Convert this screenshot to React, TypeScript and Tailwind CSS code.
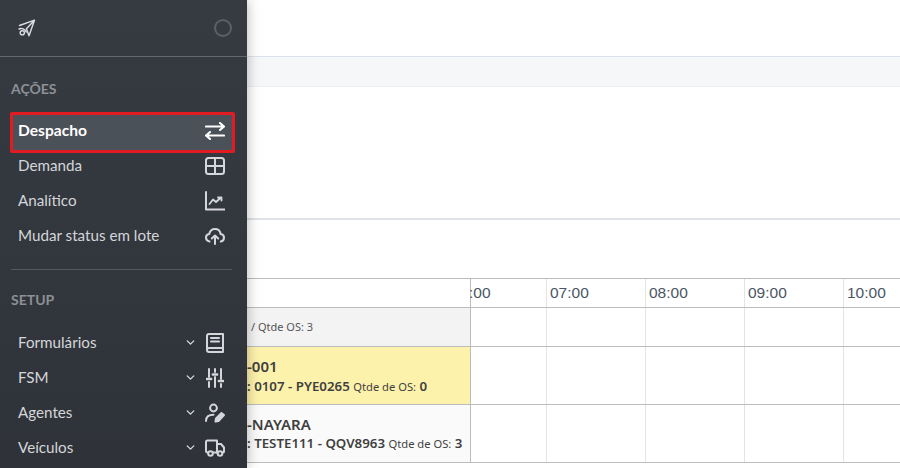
import React from "react";
import { ChevronDown } from "lucide-react";

const sv = { fill: "none", stroke: "currentColor", strokeWidth: 2, strokeLinecap: "round", strokeLinejoin: "round" } as const;

const Plane = () => (
  <svg width="18" height="18" viewBox="0 0 18 18" {...sv} strokeWidth={1.4}>
    <path d="M1.5 6.5 L16.5 1.2 L11 16.8 L8.4 9.8 L16.5 1.2" />
    <circle cx="4.3" cy="13.8" r="2.1" />
    <path d="M1 10 C3.5 8.8 7 9.8 8.2 13" />
  </svg>
);
const Swap = () => (
  <svg width="20" height="18" viewBox="0 0 20 18" {...sv} strokeWidth={2.1} className="-mt-[3px]">
    <path d="M1 4.5 H19 M15 1 L19 4.5 L15 8" />
    <path d="M19 13.5 H1 M5 10 L1 13.5 L5 17" />
  </svg>
);
const GridI = () => (
  <svg width="20" height="18" viewBox="0 0 20 18" {...sv}>
    <rect x="1" y="1" width="18" height="16" rx="2.5" />
    <path d="M10 1 V17 M1 9 H19" />
  </svg>
);
const Chart = () => (
  <svg width="20" height="20" viewBox="0 0 20 20" {...sv}>
    <path d="M1 1 V18.5 H19.5" />
    <path d="M4.5 13 L8 8.5 L11 11 L16 6.5 M13 6.5 H16.5 V9.5" strokeWidth={1.8} />
  </svg>
);
const Cloud = () => (
  <svg width="20" height="18" viewBox="0 0 20 18" {...sv}>
    <path d="M4.5 14.5 C2.4 14.2 1 12.6 1 10.6 C1 8.6 2.4 7.2 4.2 7 C5 3.6 7.4 2 10 2 C13 2 15.2 4.2 15.6 7 C17.6 7.2 19 8.8 19 10.8 C19 12.8 17.8 14.2 15.8 14.5" />
    <path d="M10 17 V8.5 M6.8 11.5 L10 8.5 L13.2 11.5" />
  </svg>
);
const Book = () => (
  <svg width="18" height="20" viewBox="0 0 18 20" {...sv}>
    <path d="M1 16 V3 C1 1.8 1.8 1 3 1 H17 V19 H3 C1.8 19 1 18 1 16.8 C1 15.6 1.8 15 3 15 H17" />
    <path d="M5 5 H13 M5 8.5 H13" />
  </svg>
);
const Sliders = () => (
  <svg width="18" height="20" viewBox="0 0 18 20" {...sv}>
    <path d="M3 1 V9 M3 14 V19 M9 1 V4 M9 9 V19 M15 1 V11 M15 16 V19" />
    <path d="M0.8 11 H5.2 M6.8 6.5 H11.2 M12.8 13 H17.2" strokeWidth={2.4} />
  </svg>
);
const UserPen = () => (
  <svg width="20" height="20" viewBox="0 0 20 20" {...sv}>
    <circle cx="8.5" cy="5" r="3.4" />
    <path d="M1 18 C1 14 4 11.8 8.5 11.8" />
    <path d="M10.5 18.5 L11 15.5 L16.5 10 L19 12 L13.5 18 Z" fill="currentColor" />
  </svg>
);
const Truck = () => (
  <svg width="20" height="18" viewBox="0 0 20 18" {...sv}>
    <path d="M3 13.5 H2.5 C1.6 13.5 1 12.9 1 12 V3 C1 2 1.6 1.5 2.5 1.5 H12 V13.5 H8" />
    <path d="M12 5 H16 L19 8.5 V12.5 C19 13.1 18.6 13.5 18 13.5 H17.5 M12 13.5 H13" />
    <circle cx="5.5" cy="14.5" r="2.3" />
    <circle cx="15" cy="14.5" r="2.3" />
  </svg>
);

const NavRow = ({ label, icon, chevron }: { label: string; icon: React.ReactNode; chevron?: boolean }) => (
  <div className="flex h-[35px] items-center pl-[18px] pr-[22px] text-[15.2px] text-[#d4d6d9]">
    <span className="flex-1">{label}</span>
    {chevron && <ChevronDown size={13} strokeWidth={2.6} className="mr-[8px] text-[#d4d6d9]" />}
    <span className="flex w-[20px] justify-center">{icon}</span>
  </div>
);

const times = ["07:00", "08:00", "09:00", "10:00"];
const cellText = "font-['Liberation_Sans',sans-serif] text-[15.5px] leading-[28px] text-[#4b5563]";

const TimeCells = ({ header }: { header?: boolean }) => (
  <div className="flex flex-1">
    <div className={`h-full w-[76px] shrink-0 border-r border-[#e4e4e4] -indent-[2px] ${cellText}`}>{header ? ":00" : ""}</div>
    {times.map((h) => (
      <div key={h} className={`h-full w-[99px] shrink-0 border-r border-[#e4e4e4] pl-[3px] ${cellText}`}>
        {header ? h : ""}
      </div>
    ))}
  </div>
);

const rowText = "font-['Noto_Sans',sans-serif] text-[#3f3f3f]";

export default function App() {
  return (
    <div className="relative h-[468px] w-[900px] overflow-hidden bg-white font-['Lato',sans-serif]">
      {/* page */}
      <div className="h-[57px] border-b border-[#dde3ea]" />
      <div className="h-[30px] border-b border-[#eeeff1] bg-[#f6f7f9]" />
      <div className="h-[133px] border-b-2 border-[#dfe2e6]" />
      <div className="h-[58px]" />
      <div className="overflow-hidden border-y border-[#bcbcbc]">
        <div className="flex h-[29px] border-b border-[#bcbcbc]">
          <div className="w-[471px] shrink-0 border-r border-[#bcbcbc]" />
          <TimeCells header />
        </div>
        <div className="flex h-[39px] border-b border-[#bcbcbc]">
          <div className="flex w-[471px] shrink-0 items-center border-r border-[#bcbcbc] bg-[#f3f3f3] pl-[251px] font-['Noto_Sans',sans-serif] text-[11px] text-[#555]">
            / Qtde OS: 3
          </div>
          <TimeCells />
        </div>
        <div className="flex h-[58px] border-b border-[#bcbcbc]">
          <div className={`flex w-[471px] shrink-0 flex-col justify-center border-r border-[#bcbcbc] bg-[#fdf2ab] pl-[247px] ${rowText}`}>
            <div className="text-[15px] font-semibold leading-[21px]">-001</div>
            <div className="text-[13.3px] font-semibold leading-[19px]">
              : 0107 - PYE0265 <span className="text-[11.2px] font-normal">Qtde de OS:</span> 0
            </div>
          </div>
          <TimeCells />
        </div>
        <div className="flex h-[57px]">
          <div className={`flex w-[471px] shrink-0 flex-col justify-center border-r border-[#bcbcbc] bg-[#fafafa] pl-[247px] ${rowText}`}>
            <div className="text-[15px] font-semibold leading-[20px]">-NAYARA</div>
            <div className="text-[13.3px] font-semibold leading-[19px]">
              : TESTE111 - QQV8963 <span className="text-[11.2px] font-normal">Qtde de OS:</span> 3
            </div>
          </div>
          <TimeCells />
        </div>
      </div>

      {/* drawer over the page */}
      <aside className="absolute inset-y-0 left-0 w-[247px] bg-gradient-to-b from-[#363b42] to-[#2f3339] shadow-[0_0_12px_rgba(0,0,0,0.3)]">
        <div className="flex h-[57px] items-center justify-between border-b border-[#63676c] pl-[18px] pr-[15px] text-[#dcdde0]">
          <Plane />
          <span className="h-[18px] w-[18px] rounded-full border-2 border-[#5c6066]" />
        </div>
        <div className="pl-[11px] pt-[23px] text-[14px] font-bold leading-[18px] text-[#8d9095]">AÇÕES</div>
        <div className="-mb-[5px] ml-[10px] mr-[12px] mt-[14px] rounded-[2px] border-[3px] border-[#e01b22]">
          <div className="flex h-[35px] items-center justify-between bg-[#4b5159] pl-[5px] pr-[7px] text-[15.6px] font-bold text-white">
            <span className="-mt-[3px]">Despacho</span>
            <Swap />
          </div>
        </div>
        <div>
          <NavRow label="Demanda" icon={<GridI />} />
          <NavRow label="Analítico" icon={<Chart />} />
          <NavRow label="Mudar status em lote" icon={<Cloud />} />
        </div>
        <div className="ml-[11px] mr-[15px] mt-[16px] border-t border-[#565a5f]" />
        <div className="pl-[11px] pt-[21px] text-[14px] font-bold leading-[18px] text-[#8d9095]">SETUP</div>
        <div className="pt-[16px]">
          <NavRow label="Formulários" icon={<Book />} chevron />
          <NavRow label="FSM" icon={<Sliders />} chevron />
          <NavRow label="Agentes" icon={<UserPen />} chevron />
          <NavRow label="Veículos" icon={<Truck />} chevron />
        </div>
      </aside>
    </div>
  );
}
